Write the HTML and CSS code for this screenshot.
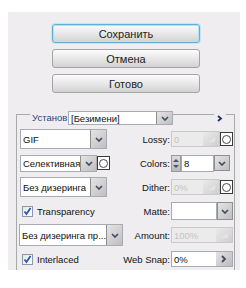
FILE: index.html
```html
<!DOCTYPE html>
<html lang="ru">
<head>
  <meta charset="UTF-8">
  <title>Save for Web</title>
  <link rel="stylesheet" href="styles.css">
</head>
<body>
  <div class="panel">
    <div class="actions">
      <button class="btn btn-focus">Сохранить</button>
      <button class="btn">Отмена</button>
      <button class="btn">Готово</button>
    </div>

    <div class="group">
      <div class="group-head">
        <span class="legend">Установ</span>
        <div class="select preset">
          <span class="value">[Безимени]</span>
          <span class="drop"><svg width="8" height="5" viewBox="0 0 8 5"><path d="M1 1l3 3 3-3" fill="none" stroke="#3b4a63" stroke-width="1.6"/></svg></span>
        </div>
        <span class="spacer"></span>
        <span class="menu-btn"><svg width="6" height="7" viewBox="0 0 6 7"><path d="M1 1l3 2.5-3 2.5" fill="none" stroke="#1c2f78" stroke-width="1.8"/></svg></span>
        <span class="tail"></span>
      </div>

      <div class="settings">
        <div class="cell-left">
          <div class="select w-full tall">
            <span class="value">GIF</span>
            <span class="drop"><svg width="8" height="5" viewBox="0 0 8 5"><path d="M1 1l3 3 3-3" fill="none" stroke="#3b4a63" stroke-width="1.6"/></svg></span>
          </div>
        </div>
        <div class="cell-right">
          <span class="lbl">Lossy:</span>
          <div class="ctl">
            <div class="field off w-short"><span class="value">0</span><span class="slide"><svg width="9" height="7" viewBox="0 0 9 7"><path d="M1 6l7-5v5z" fill="#e4e4e4"/></svg></span></div>
            <span class="opt"><i></i></span>
          </div>
        </div>

        <div class="cell-left">
          <div class="select w-mid">
            <span class="value">Селективная</span>
            <span class="drop"><svg width="8" height="5" viewBox="0 0 8 5"><path d="M1 1l3 3 3-3" fill="none" stroke="#3b4a63" stroke-width="1.6"/></svg></span>
          </div>
          <span class="opt"><i></i></span>
        </div>
        <div class="cell-right">
          <span class="lbl">Colors:</span>
          <div class="ctl">
            <span class="spin"><svg width="8" height="13" viewBox="0 0 8 13"><path d="M1 5l3-3 3 3z" fill="#4a5468"/><path d="M1 8l3 3 3-3z" fill="#4a5468"/></svg></span>
            <div class="field colors"><span class="value">8</span></div>
            <span class="drop solo"><svg width="8" height="5" viewBox="0 0 8 5"><path d="M1 1l3 3 3-3" fill="none" stroke="#3b4a63" stroke-width="1.6"/></svg></span>
          </div>
        </div>

        <div class="cell-left">
          <div class="select w-full tall">
            <span class="value">Без дизеринга</span>
            <span class="drop"><svg width="8" height="5" viewBox="0 0 8 5"><path d="M1 1l3 3 3-3" fill="none" stroke="#3b4a63" stroke-width="1.6"/></svg></span>
          </div>
        </div>
        <div class="cell-right">
          <span class="lbl">Dither:</span>
          <div class="ctl">
            <div class="field off w-short"><span class="value">0%</span><span class="slide"><svg width="9" height="7" viewBox="0 0 9 7"><path d="M1 6l7-5v5z" fill="#e4e4e4"/></svg></span></div>
            <span class="opt"><i></i></span>
          </div>
        </div>

        <div class="cell-left">
          <label class="check"><span class="box"><svg width="9" height="9" viewBox="0 0 9 9"><path d="M1.5 4.5l2 2.5 4-6" fill="none" stroke="#2b5ba8" stroke-width="1.8"/></svg></span>Transparency</label>
        </div>
        <div class="cell-right">
          <span class="lbl">Matte:</span>
          <div class="ctl">
            <div class="field matte"></div>
            <span class="drop solo tall"><svg width="8" height="5" viewBox="0 0 8 5"><path d="M1 1l3 3 3-3" fill="none" stroke="#3b4a63" stroke-width="1.6"/></svg></span>
          </div>
        </div>

        <div class="cell-left">
          <div class="select w-wide taller">
            <span class="value">Без дизеринга пр...</span>
            <span class="drop"><svg width="8" height="5" viewBox="0 0 8 5"><path d="M1 1l3 3 3-3" fill="none" stroke="#3b4a63" stroke-width="1.6"/></svg></span>
          </div>
        </div>
        <div class="cell-right">
          <span class="lbl">Amount:</span>
          <div class="ctl">
            <div class="field off w-long"><span class="value">100%</span><span class="slide"><svg width="9" height="7" viewBox="0 0 9 7"><path d="M1 6l7-5v5z" fill="#e4e4e4"/></svg></span></div>
          </div>
        </div>

        <div class="cell-left">
          <label class="check"><span class="box"><svg width="9" height="9" viewBox="0 0 9 9"><path d="M1.5 4.5l2 2.5 4-6" fill="none" stroke="#2b5ba8" stroke-width="1.8"/></svg></span>Interlaced</label>
        </div>
        <div class="cell-right">
          <span class="lbl">Web Snap:</span>
          <div class="ctl">
            <div class="field w-long"><span class="value">0%</span><span class="slide on"><svg width="6" height="8" viewBox="0 0 6 8"><path d="M1 1l3 3-3 3" fill="none" stroke="#444b58" stroke-width="1.8"/></svg></span></div>
          </div>
        </div>
      </div>
    </div>
  </div>
</body>
</html>
```

FILE: styles.css
```css
* {
  box-sizing: border-box;
}
body {
  margin: 0;
  background: #fff;
  font-family: "Liberation Sans", Arial, sans-serif;
  font-size: 9.5px;
  color: #111;
}
.panel {
  margin: 12px 6px 0 8px;
  height: 258px;
  background: #efedef;
  overflow: hidden;
}
.actions {
  display: flex;
  flex-direction: column;
  gap: 6px;
  padding: 12px 0 0 44px;
}
.btn {
  width: 148px;
  height: 19px;
  padding: 0;
  border: 1px solid #a4a4a4;
  border-radius: 3px;
  background: linear-gradient(#fcfcfc, #e8e8e8 50%, #d2d2d2);
  font-family: "Liberation Sans", Arial, sans-serif;
  font-size: 11px;
  color: #222;
}
.btn-focus {
  border-color: #5fb0d2;
  box-shadow: 0 0 0 1px #c4e6f4, inset 0 0 0 1px #b5e0f2;
}

.group {
  margin: 21px 5px 0 8px;
  border: 1px solid #a9a9a9;
  border-bottom: none;
  height: 200px;
}
.group-head {
  display: flex;
  align-items: center;
  height: 14px;
  margin-top: -4px;
  padding-left: 13px;
}
.legend {
  width: 38px;
  padding-left: 2px;
  background: #efedef;
  color: #2c4385;
  white-space: nowrap;
  overflow: hidden;
  line-height: 14px;
}
.spacer {
  flex: 1;
}
.menu-btn {
  display: flex;
  align-items: center;
  justify-content: center;
  width: 12px;
  height: 10px;
  background: #efedef;
}
.tail {
  width: 8px;
}

.select {
  display: flex;
  height: 17px;
  background: #fff;
  border: 1px solid #a7acb4;
}
.select .value,
.field .value {
  flex: 1;
  padding-left: 2px;
  white-space: nowrap;
  overflow: hidden;
  display: flex;
  align-items: center;
}
.drop {
  display: flex;
  align-items: center;
  justify-content: center;
  width: 16px;
  background: linear-gradient(135deg, #e4e4e4, #bfbfbf);
  border-left: 1px solid #8f8f8f;
}
.drop.solo {
  height: 16px;
  border: 1px solid #8f8f8f;
}
.drop.solo.tall {
  height: 18px;
}
.preset {
  width: 105px;
  height: 14px;
}
.w-full { width: 87px; }
.w-mid { width: 77px; }
.w-wide { width: 104px; margin-left: -1px; }
.tall { height: 20px; }
.taller { height: 22px; }

.settings {
  display: grid;
  grid-template-columns: 103px 1fr;
  grid-auto-rows: 24px;
  align-items: center;
  margin-top: 2px;
  padding: 0 1px 0 3px;
}
.cell-left {
  display: flex;
  align-items: center;
}
.cell-right {
  display: flex;
  align-items: center;
  justify-content: flex-end;
}
.lbl {
  margin-right: 1px;
  white-space: nowrap;
}
.ctl {
  display: flex;
  align-items: center;
  width: 62px;
}

.opt {
  display: flex;
  align-items: center;
  justify-content: center;
  width: 13px;
  height: 14px;
  background: #fff;
  border: 1px solid #3a3a3a;
}
.opt i {
  width: 9px;
  height: 9px;
  border: 1px solid #4a4a4a;
  border-radius: 50%;
}

.field {
  display: flex;
  height: 16px;
  background: #fff;
  border: 1px solid #a7acb4;
}
.field.off {
  background: #ebebeb;
  border-color: #c9c9c9;
  color: #c4c4c4;
}
.w-short { width: 49px; }
.w-long { width: 62px; }
.colors { width: 33px; height: 17px; }
.matte { width: 46px; height: 18px; }
.slide {
  display: flex;
  align-items: center;
  justify-content: center;
  width: 16px;
  background: linear-gradient(135deg, #e9e9e9, #cfcfcf);
}
.slide.on {
  background: linear-gradient(135deg, #e2e2e2, #bcbcbc);
}
.spin {
  display: flex;
  align-items: center;
  justify-content: center;
  width: 10px;
  height: 17px;
  background: linear-gradient(#dcdcdc, #b9b9b9);
  border: 1px solid #9a9a9a;
}

.check {
  display: flex;
  align-items: center;
  gap: 4px;
  padding-left: 2px;
}
.check .box {
  display: flex;
  align-items: center;
  justify-content: center;
  width: 11px;
  height: 11px;
  border: 1px solid #8a98a8;
  background: linear-gradient(135deg, #e3e7ec, #fff);
}
```
